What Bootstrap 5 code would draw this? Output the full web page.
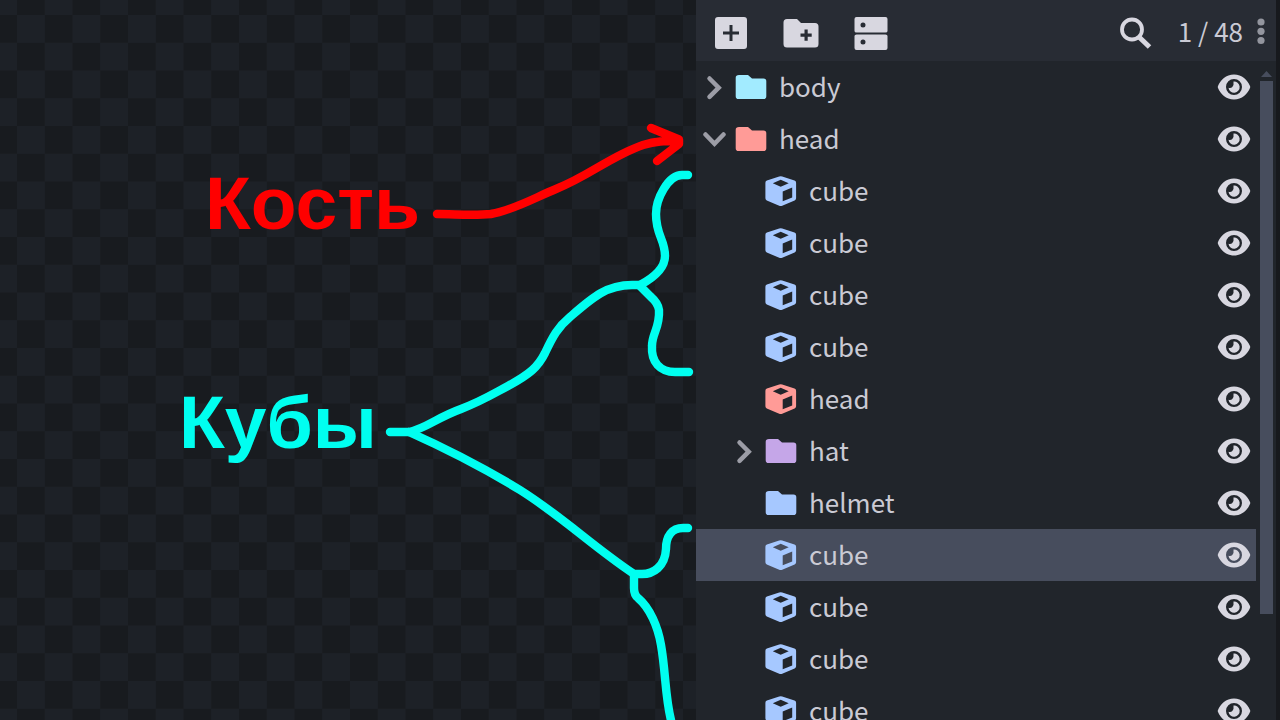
<!DOCTYPE html>
<html lang="ru">
<head>
<meta charset="utf-8">
<meta name="viewport" content="width=device-width, initial-scale=1">
<title>Outliner</title>
<link href="https://cdn.jsdelivr.net/npm/bootstrap@5.3.0/dist/css/bootstrap.min.css" rel="stylesheet">
<style>
  :root { --ui: #282c34; --back: #21252b; --edge: #17191d; --selected: #474d5d; --ink: #cacad4; --bright: #d8d7e0; --muted: #9c9da6; }
  body { background: var(--edge); color: var(--ink); font-family: "Noto Sans CJK SC", "Noto Sans", sans-serif; font-size: 26px; line-height: 32px; }
  svg { display: block; flex: none; }
  .stage { background: #181b1f; }
  .stage text { font-family: "Liberation Sans", sans-serif; font-size: 75px; font-weight: 700; }
  .outliner { flex: 0 0 584px; background: var(--edge); padding-right: 4px; }
  .toolbar { background: var(--ui); height: 61px; padding: 4px 5px 0 16px; }
  .tools { gap: 32px; }
  .tool { padding: 0; border: 0; background: none; color: var(--bright); }
  .tree-pane { background: var(--back); }
  .tree-row { height: 52px; padding: 0 5px 0 7px; }
  .tree-row.active { background: var(--selected); }
  .tree-row.nested { padding-left: 37px; }
  .twisty { width: 24px; height: 32px; color: var(--muted); margin-right: 8px; }
  .node-name { margin-left: 12px; padding-bottom: 2px; }
  .counter { padding-bottom: 4px; }
  .track { width: 20px; padding: 10px 3px 0 4px; }
  .thumb { background: var(--selected); height: 533px; margin-top: 4px; }
  .c-aqua { color: #a2ebff; } .c-red { color: #ff9b97; } .c-violet { color: #c5a6e8; } .c-blue { color: #a6c8ff; }
</style>
</head>
<body>
<svg width="0" height="0" class="position-absolute" aria-hidden="true">
  <symbol id="folder" viewBox="0 0 32 32"><path fill="currentColor" d="M4 4h9l4 3.500h11.500q2.800 0 2.800 2.800v15q0 2.800-2.800 2.800H3.500q-2.800 0-2.800-2.800V6.800Q.7 4 4 4z"/></symbol>
  <symbol id="cube" viewBox="0 0 32 32"><path fill="currentColor" fill-rule="evenodd" d="M14.200 1.400q1.500-.5 3 0L29.500 5.500q1.600.6 1.600 2.200v15.600q0 1.500-1.500 2.200L17.200 30.800q-1.500.6-3 0L1.800 25.500Q.4 24.900.4 23.300V7.700q0-1.600 1.500-2.200zM15.700 4.700L7.800 8.200l7.900 3.600 8-3.600zM17.700 16.500v9.800l9.500-3.900v-9.800z"/></symbol>
  <symbol id="eye" viewBox="0 0 34 26"><path fill="currentColor" fill-rule="evenodd" d="M17 .5C25 .5 30.500 6 33 12q.5 1 0 2C30.500 20 25 25.500 17 25.500S3.500 20 1 14q-.5-1 0-2C3.500 6 9 .5 17 .5zM17 5a8 8 0 1 0 0 16 8 8 0 0 0 0-16z"/><path fill="currentColor" d="M16.500 7.500a5.600 5.600 0 1 1-5 6.200q2.500.6 3.800-.8 1.800-2 1.200-5.400z"/></symbol>
  <symbol id="closed" viewBox="0 0 24 32"><path fill="none" stroke="currentColor" stroke-width="4.500" stroke-linecap="round" d="M6.500 7.500l9.200 9.200-9.200 9.200"/></symbol>
  <symbol id="open" viewBox="0 0 24 32"><path fill="none" stroke="currentColor" stroke-width="4.500" stroke-linecap="round" d="M2.500 11.500l9 9.300 9-9.300"/></symbol>
</svg>

<div class="d-flex vh-100 overflow-hidden">
  <main class="stage flex-grow-1 overflow-hidden">
    <svg class="w-100 h-100" viewBox="0 0 696 720" preserveAspectRatio="xMaxYMin slice">
      <defs><pattern id="checker" x="17" y="15" width="111" height="111" patternUnits="userSpaceOnUse" viewBox="0 0 4 4"><path fill="#1d2127" d="M0 0h1v1H0zM2 0h1v1H2zM1 1h1v1H1zM3 1h1v1H3zM0 2h1v1H0zM2 2h1v1H2zM1 3h1v1H1zM3 3h1v1H3z"/></pattern></defs>
      <rect width="696" height="720" fill="url(#checker)"/>
      <g fill="none" stroke="#f00" stroke-width="8.400" stroke-linecap="round" stroke-linejoin="round">
        <path d="M437 214C455 214 472 216 491 214C514 210 536 197 556 189C589 176 611 156 643 145C656 141 664 141 679 141M651 128L679 139.500V144L657 161"/>
      </g>
      <g fill="none" stroke="#00fff0" stroke-width="8.400" stroke-linecap="round" stroke-linejoin="round">
        <path d="M390 432H409C427 428 436 418 461 409C482 401 493 394 508 386C530 374 538 367 545 353C553 336 558 327 570 317C592 298 606 285 632 285H640"/>
        <path d="M640 285C655 277 665 268 665 256C665 239 656 236 656 214C656 199 668 175 682 175H688"/>
        <path d="M640 286L651 297Q658 303 659 310C660 328 652 333 652 346C651 362 660 372 675 372H689"/>
        <path d="M409 432C447 449 484 468 520 490C563 517 592 546 634 574H642C653 574 665 567 666 549C666 536 672 528 683 528H688"/>
        <path d="M634 574V588Q634 595 638 598C650 608 658 627 661 645C666 673 665 700 672 724"/>
      </g>
      <text x="205" y="229" fill="#f00">Кость</text>
      <text x="179" y="448" fill="#00fff0">Кубы</text>
    </svg>
  </main>

  <aside class="outliner d-flex flex-column">
    <header class="toolbar d-flex align-items-center justify-content-between flex-shrink-0">
      <div class="tools d-flex align-items-center">
        <button class="tool" aria-label="Add cube"><svg width="38" height="38" viewBox="0 0 38 38"><path fill="currentColor" fill-rule="evenodd" d="M6 3h26q3 0 3 3v26q0 3-3 3H6q-3 0-3-3V6q0-3 3-3zM17.500 11v6.500H11v3h6.500V27h3v-6.500H27v-3h-6.500V11z"/></svg></button>
        <button class="tool" aria-label="Add group"><svg width="38" height="38" viewBox="0 0 38 38"><path fill="currentColor" fill-rule="evenodd" d="M5 5h10l4 4h14q3.500 0 3.500 3.500V30q0 3.500-3.500 3.500H5Q1.500 33.500 1.500 30V8.500Q1.500 5 5 5zM22.500 15.500v4H18.500v3.200h4v4h3.200v-4h4v-3.200h-4v-4z"/></svg></button>
        <button class="tool" aria-label="Toggle options"><svg width="38" height="38" viewBox="0 0 38 38"><path fill="currentColor" fill-rule="evenodd" d="M4.500 3h29q2 0 2 2v12q0 1.500-2 1.500h-29q-2 0-2-1.500V5q0-2 2-2zM11 8.500a2.500 2.500 0 1 0 0 5 2.500 2.500 0 0 0 0-5zM4.500 20.500h29q2 0 2 1.500v12q0 2-2 2h-29q-2 0-2-2V22q0-1.500 2-1.500zM11 25.500a2.500 2.500 0 1 0 0 5 2.500 2.500 0 0 0 0-5z"/></svg></button>
      </div>
      <div class="d-flex align-items-center">
        <button class="tool me-4" aria-label="Search"><svg width="36" height="36" viewBox="0 0 36 36"><g fill="none" stroke="currentColor"><circle cx="14" cy="14.500" r="10" stroke-width="3.800"/><path stroke-width="5" d="M20.500 21.500L31.500 32"/></g></svg></button>
        <span class="counter">1 / 48</span>
        <button class="tool ms-2" aria-label="Menu"><svg width="20" height="36" viewBox="0 0 20 36"><g fill="#93959e"><circle cx="10" cy="7" r="3.600"/><circle cx="10" cy="16.300" r="3.600"/><circle cx="10" cy="25.500" r="3.600"/></g></svg></button>
      </div>
    </header>
    <div class="tree-pane d-flex flex-grow-1 overflow-hidden">
      <ul class="list-unstyled flex-grow-1 mb-0" id="tree"></ul>
      <div class="track">
        <svg width="13" height="6" viewBox="0 0 13 6"><path fill="#474d5d" d="M6.500 0L12 6H1z"/></svg>
        <div class="thumb"></div>
      </div>
    </div>
  </aside>
</div>

<script src="https://cdn.jsdelivr.net/npm/bootstrap@5.3.0/dist/js/bootstrap.bundle.min.js"></script>
<script>
  // [name, icon, colour, nested, twisty, selected]
  const nodes = [
    ['body', 'folder', 'aqua', false, 'closed'],
    ['head', 'folder', 'red', false, 'open'],
    ['cube', 'cube', 'blue', true], ['cube', 'cube', 'blue', true],
    ['cube', 'cube', 'blue', true], ['cube', 'cube', 'blue', true],
    ['head', 'cube', 'red', true],
    ['hat', 'folder', 'violet', true, 'closed'],
    ['helmet', 'folder', 'blue', true],
    ['cube', 'cube', 'blue', true, '', true],
    ['cube', 'cube', 'blue', true], ['cube', 'cube', 'blue', true], ['cube', 'cube', 'blue', true]
  ];
  document.getElementById('tree').innerHTML = nodes.map(([name, icon, colour, nested, twisty, selected]) => {
    const arrow = twisty
      ? `<button class="tool twisty" aria-label="Toggle ${name}"><svg width="24" height="32"><use href="#${twisty}"/></svg></button>`
      : '<span class="twisty"></span>';
    return `<li class="tree-row d-flex align-items-center${nested ? ' nested' : ''}${selected ? ' active' : ''}">${arrow}
      <svg class="c-${colour}" width="32" height="32"><use href="#${icon}"/></svg>
      <span class="node-name flex-grow-1">${name}</span>
      <button class="tool" aria-label="Visibility"><svg width="34" height="26"><use href="#eye"/></svg></button></li>`;
  }).join('');
</script>
</body>
</html>
